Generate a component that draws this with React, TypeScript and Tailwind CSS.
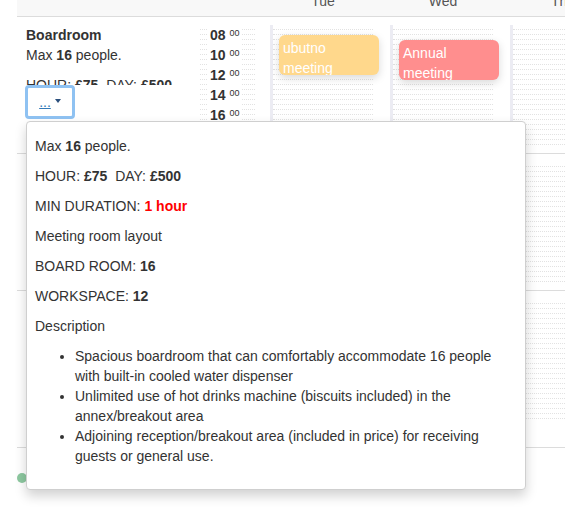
import React from 'react';

const lines = Array.from({ length: 24 });
const times = ['08', '10', '12', '14', '16'];

function Dots() {
  return (
    <div>
      {lines.map((_, i) => (
        <div key={i} className="h-[5px] border-b border-dotted border-[#e2e2e2]" />
      ))}
    </div>
  );
}

function DayCell({ children }: { children?: React.ReactNode }) {
  return (
    <div className="flex w-[120px] shrink-0">
      <div className="w-[3px] bg-[#ececf3]" />
      <div className="relative w-[100px]">
        <Dots />
        {children}
      </div>
    </div>
  );
}

function TimeCell({ labels }: { labels?: boolean }) {
  return (
    <div className="w-[70px] shrink-0">
      <div className="relative w-[55px]">
        <Dots />
        {labels && (
          <div className="absolute inset-x-0 top-0 flex flex-col items-start pl-[7px]">
            {times.map((t) => (
              <span key={t} className="bg-white px-[3px] text-[14px] font-bold leading-[20px]">
                {t}{' '}
                <sup className="text-[9px] font-normal">00</sup>
              </span>
            ))}
          </div>
        )}
      </div>
    </div>
  );
}

function Event({ label, className }: { label: string; className: string }) {
  return (
    <div
      className={`absolute left-[6px] h-[40px] w-[100px] overflow-hidden rounded-[6px] px-[4px] pt-[3px] text-[14px] leading-[20px] text-white shadow-[0_3px_8px_rgba(0,0,0,0.15)] ${className}`}
    >
      {label}
    </div>
  );
}

function Popover() {
  return (
    <div className="absolute left-[9px] top-[96px] z-10 w-[500px] rounded-[4px] border border-[#cfcfcf] bg-white px-[8px] pb-[13px] pt-[14px] text-[14px] leading-[20px] shadow-[0_6px_12px_rgba(0,0,0,0.18)]">
      <p className="mb-[10px]">
        Max <b>16</b> people.
      </p>
      <p className="mb-[10px]">
        HOUR: <b>£75</b>&nbsp; DAY: <b>£500</b>
      </p>
      <p className="mb-[10px]">
        MIN DURATION: <b className="text-[#f00]">1 hour</b>
      </p>
      <p className="mb-[10px]">Meeting room layout</p>
      <p className="mb-[10px]">
        BOARD ROOM: <b>16</b>
      </p>
      <p className="mb-[10px]">
        WORKSPACE: <b>12</b>
      </p>
      <p className="mb-[10px]">Description</p>
      <ul className="mb-[10px] list-disc pl-[40px]">
        <li>Spacious boardroom that can comfortably accommodate 16 people with built-in cooled water dispenser</li>
        <li>Unlimited use of hot drinks machine (biscuits included) in the annex/breakout area</li>
        <li>Adjoining reception/breakout area (included in price) for receiving guests or general use.</li>
      </ul>
    </div>
  );
}

export default function App() {
  return (
    <div className="h-[518px] w-[565px] overflow-hidden bg-white font-['Liberation_Sans',Arial,sans-serif] text-[#333]">
      <div className="ml-[17px] w-[620px]">
        {/* day header */}
        <div className="flex h-[17px] overflow-hidden border-b border-[#dcdcdc] bg-[#f8f8f8] text-[14px] leading-[20px] text-[#555]">
          <div className="w-[253px] shrink-0" />
          {['Tue', 'Wed', 'Thu'].map((d) => (
            <div key={d} className="flex w-[120px] shrink-0">
              <div className="w-[3px]" />
              <div className="-mt-[9px] w-[100px] text-center">{d}</div>
            </div>
          ))}
        </div>

        {/* room row */}
        <div className="flex border-b border-[#dcdcdc] py-[8px]">
          <div className="relative w-[183px] shrink-0 pl-[9px] text-[14px] leading-[20px]">
            <div className="h-[60px] overflow-hidden">
              <div className="font-bold">Boardroom</div>
              <p className="mb-[10px]">
                Max <b>16</b> people.
              </p>
              <p>
                HOUR: <b>£75</b>&nbsp; DAY: <b>£500</b>
              </p>
            </div>
            <button className="-ml-[1px] flex h-[34px] w-[50px] items-center justify-center gap-[4px] rounded-[4px] border-[3px] border-[#8fc2f2] bg-white">
              <span className="text-[#337ab7] underline">...</span>
              <span className="mt-[-2px] h-0 w-0 border-x-[3px] border-t-[4px] border-x-transparent border-t-[#2b4f7c]" />
            </button>
            <Popover />
          </div>
          <TimeCell labels />
          <DayCell>
            <Event label="ubutno meeting" className="top-[10px] bg-[#ffd88c]" />
          </DayCell>
          <DayCell>
            <Event label="Annual meeting" className="top-[15px] bg-[#ff8e8e]" />
          </DayCell>
          <DayCell />
        </div>

        <div className="flex border-b border-[#dcdcdc] py-[8px]">
          <div className="w-[183px] shrink-0" />
          <TimeCell />
          <DayCell />
          <DayCell />
          <DayCell />
        </div>

        <div className="flex h-[157px] border-b border-[#dcdcdc] py-[8px]">
          <div className="w-[183px] shrink-0" />
          <TimeCell />
          <DayCell />
          <DayCell />
          <DayCell />
        </div>

        <div className="flex pt-[25px]">
          <div className="h-[10px] w-[10px] rounded-full bg-[#8dc8a0]" />
        </div>
      </div>
    </div>
  );
}
